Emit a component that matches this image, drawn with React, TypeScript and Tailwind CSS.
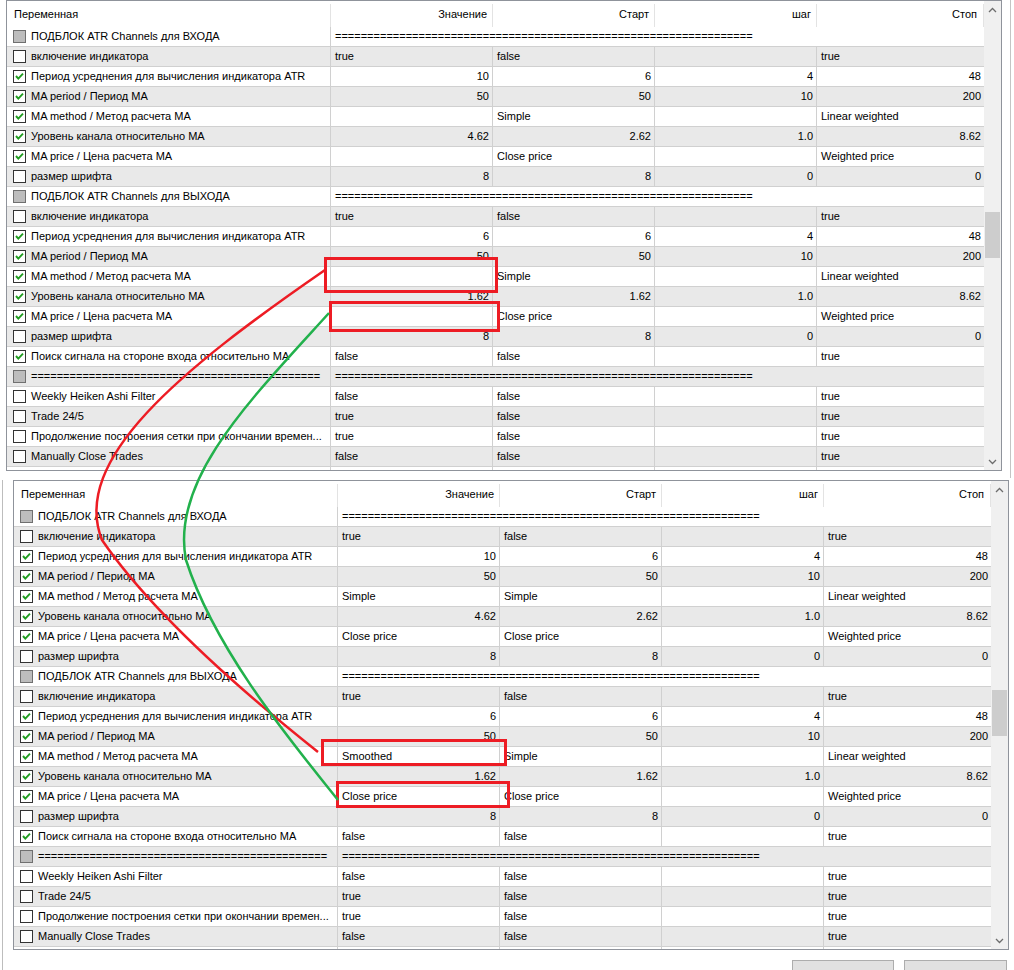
import React from 'react';

type Row =
  | { kind: 'section'; name: string }
  | { kind: 'param'; checked: boolean; name: string; values: string[] };

const EQ_NAME = '=============================================';
const EQ_VALUE = '=================================================================';

// values: [Значение, Старт, шаг, Стоп]; '?' marks cells left blank in the "before" grid
const rows: Row[] = [
  { kind: 'section', name: 'ПОДБЛОК ATR Channels для ВХОДА' },
  { kind: 'param', checked: false, name: 'включение индикатора', values: ['true', 'false', '', 'true'] },
  { kind: 'param', checked: true, name: 'Период усреднения для вычисления индикатора ATR', values: ['10', '6', '4', '48'] },
  { kind: 'param', checked: true, name: 'MA period / Период MA', values: ['50', '50', '10', '200'] },
  { kind: 'param', checked: true, name: 'MA method / Метод расчета MA', values: ['?Simple', 'Simple', '', 'Linear weighted'] },
  { kind: 'param', checked: true, name: 'Уровень канала относительно MA', values: ['4.62', '2.62', '1.0', '8.62'] },
  { kind: 'param', checked: true, name: 'MA price / Цена расчета MA', values: ['?Close price', 'Close price', '', 'Weighted price'] },
  { kind: 'param', checked: false, name: 'размер шрифта', values: ['8', '8', '0', '0'] },
  { kind: 'section', name: 'ПОДБЛОК ATR Channels для ВЫХОДА' },
  { kind: 'param', checked: false, name: 'включение индикатора', values: ['true', 'false', '', 'true'] },
  { kind: 'param', checked: true, name: 'Период усреднения для вычисления индикатора ATR', values: ['6', '6', '4', '48'] },
  { kind: 'param', checked: true, name: 'MA period / Период MA', values: ['50', '50', '10', '200'] },
  { kind: 'param', checked: true, name: 'MA method / Метод расчета MA', values: ['?Smoothed', 'Simple', '', 'Linear weighted'] },
  { kind: 'param', checked: true, name: 'Уровень канала относительно MA', values: ['1.62', '1.62', '1.0', '8.62'] },
  { kind: 'param', checked: true, name: 'MA price / Цена расчета MA', values: ['?Close price', 'Close price', '', 'Weighted price'] },
  { kind: 'param', checked: false, name: 'размер шрифта', values: ['8', '8', '0', '0'] },
  { kind: 'param', checked: true, name: 'Поиск сигнала на стороне входа относительно MA', values: ['false', 'false', '', 'true'] },
  { kind: 'section', name: EQ_NAME },
  { kind: 'param', checked: false, name: 'Weekly Heiken Ashi Filter', values: ['false', 'false', '', 'true'] },
  { kind: 'param', checked: false, name: 'Trade 24/5', values: ['true', 'false', '', 'true'] },
  { kind: 'param', checked: false, name: 'Продолжение построения сетки при окончании времен...', values: ['true', 'false', '', 'true'] },
  { kind: 'param', checked: false, name: 'Manually Close Trades', values: ['false', 'false', '', 'true'] },
  { kind: 'param', checked: false, name: '', values: ['', '', '', ''] },
];

const Checkbox = ({ state }: { state: 'on' | 'off' | 'section' }) => {
  if (state === 'section') {
    return <div className="w-[13px] h-[13px] shrink-0 border border-[#6f6f6f] bg-[#bdbdbd]" />;
  }
  return (
    <div className="w-[13px] h-[13px] shrink-0 border border-[#333333] bg-white relative">
      {state === 'on' && (
        <svg viewBox="0 0 11 11" className="absolute inset-0 w-[11px] h-[11px]">
          <polyline points="2,5 4.3,7.6 9,2.6" fill="none" stroke="#1f9c1f" strokeWidth="1.9" />
        </svg>
      )}
    </div>
  );
};

const Chevron = ({ up }: { up: boolean }) => (
  <svg viewBox="0 0 9 6" className="w-[9px] h-[6px]">
    <polyline points={up ? '1,5 4.5,1.5 8,5' : '1,1 4.5,4.5 8,1'} fill="none" stroke="#6d6d6d" strokeWidth="1.3" />
  </svg>
);

const Scrollbar = ({ thumbTop }: { thumbTop: number }) => (
  <div className="w-[17px] shrink-0 bg-[#f0f0f0] flex flex-col">
    <div className="h-[17px] flex items-center justify-center shrink-0">
      <Chevron up />
    </div>
    <div className="shrink-0" style={{ height: thumbTop }} />
    <div className="h-[46px] mx-[1px] bg-[#cdcdcd] shrink-0" />
    <div className="flex-1" />
    <div className="h-[17px] flex items-center justify-center shrink-0">
      <Chevron up={false} />
    </div>
  </div>
);

const isNum = (v: string) => /^[\d.]+$/.test(v);

const ValueCell = ({ value, last }: { value: string; last?: boolean }) => (
  <div
    className={`${last ? 'flex-1' : 'w-[162px] shrink-0 border-r border-[#d0d0d0]'} h-full flex items-center overflow-hidden whitespace-nowrap ${
      isNum(value) ? 'justify-end pr-[3px]' : 'pl-[4px]'
    }`}
  >
    {value}
  </div>
);

const GridRow = ({ row, index, before }: { row: Row; index: number; before: boolean }) => {
  const bg = index % 2 === 0 ? 'bg-white' : 'bg-[#e9e9e9]';
  if (row.kind === 'section') {
    return (
      <div className={`flex shrink-0 h-[20px] border-b border-[#d0d0d0] ${bg}`}>
        <div className="w-[324px] shrink-0 h-full flex items-center gap-[5px] pl-[6px] border-r border-[#d0d0d0] overflow-hidden whitespace-nowrap">
          <Checkbox state="section" />
          <span>{row.name}</span>
        </div>
        <div className="flex-1 h-full flex items-center pl-[4px] overflow-hidden whitespace-nowrap">{EQ_VALUE}</div>
      </div>
    );
  }
  const vals = row.values.map((v) => (v.startsWith('?') ? (before ? '' : v.slice(1)) : v));
  return (
    <div className={`flex shrink-0 h-[20px] border-b border-[#d0d0d0] ${bg}`}>
      <div className="w-[324px] shrink-0 h-full flex items-center gap-[5px] pl-[6px] border-r border-[#d0d0d0] overflow-hidden whitespace-nowrap">
        {row.name && <Checkbox state={row.checked ? 'on' : 'off'} />}
        <span>{row.name}</span>
      </div>
      <ValueCell value={vals[0]} />
      <ValueCell value={vals[1]} />
      <ValueCell value={vals[2]} />
      <ValueCell value={vals[3]} last />
    </div>
  );
};

const HeaderCell = ({ label, wide, last }: { label: string; wide?: boolean; last?: boolean }) => (
  <div
    className={`${wide ? 'w-[324px] shrink-0 justify-start pl-[7px]' : last ? 'flex-1 justify-end pr-[7px]' : 'w-[162px] shrink-0 justify-end pr-[6px]'} h-full flex items-center relative`}
  >
    {label}
    <div className="absolute right-0 top-[3px] bottom-0 w-px bg-[#e3e3e3]" />
  </div>
);

const ParamGrid = ({ before, thumbTop, height }: { before: boolean; thumbTop: number; height: string }) => (
  <div className={`w-[996px] ${height} border border-[#8f939b] flex overflow-hidden bg-white`}>
    <div className="flex-1 flex flex-col overflow-hidden">
      <div className="h-[26px] shrink-0 flex">
        <HeaderCell label="Переменная" wide />
        <HeaderCell label="Значение" />
        <HeaderCell label="Старт" />
        <HeaderCell label="шаг" />
        <HeaderCell label="Стоп" last />
      </div>
      {rows.map((r, i) => (
        <GridRow key={i} row={r} index={i} before={before} />
      ))}
    </div>
    <Scrollbar thumbTop={thumbTop} />
  </div>
);

export default function App() {
  return (
    <div
      className="relative w-[1014px] h-[970px] overflow-hidden bg-white text-[11px] text-black leading-none"
      style={{ fontFamily: '"Liberation Sans", Arial, sans-serif' }}
    >
      <div className="w-[1011px] h-[478px] border-r border-[#c4c4c4]">
        <div className="ml-[6px]">
          <ParamGrid before thumbTop={194} height="h-[471px]" />
        </div>
      </div>

      <div className="mt-[2px] ml-[2px] border-l border-[#bdbdbd] pl-[10px] h-[490px]">
        <ParamGrid before={false} thumbTop={192} height="h-[470px]" />
        <div className="mt-[10px] w-[997px] flex justify-end gap-[10px] pr-[3px]">
          <div className="w-[102px] h-[22px] border border-[#adadad] bg-[#e1e1e1]" />
          <div className="w-[103px] h-[22px] border border-[#adadad] bg-[#e1e1e1]" />
        </div>
      </div>

      {/* annotation layer: paint-style boxes and arrows */}
      <svg className="absolute inset-0 w-[1014px] h-[970px] pointer-events-none" viewBox="0 0 1014 970">
        <g fill="none" stroke="#ed1c24" strokeWidth="3">
          <rect x="325.5" y="258.5" width="171" height="33" />
          <rect x="330.5" y="302.5" width="168" height="28" />
          <rect x="322.5" y="740.5" width="183" height="24" />
          <rect x="337.5" y="782.5" width="171" height="24" />
        </g>
        <path d="M 325 270 C 180 370, 70 460, 102 540 C 150 610, 240 690, 318 752" fill="none" stroke="#ed1c24" strokeWidth="2.5" />
        <path d="M 329 313 C 250 400, 170 480, 186 560 C 215 650, 290 740, 338 800" fill="none" stroke="#22b14c" strokeWidth="2.5" />
      </svg>
    </div>
  );
}
